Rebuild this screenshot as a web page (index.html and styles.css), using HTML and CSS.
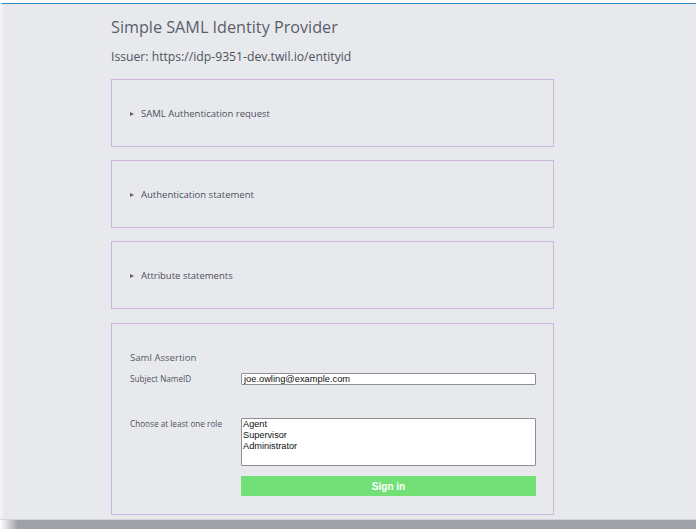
FILE: index.html
```html
<!DOCTYPE html>
<html>
<head>
<meta charset="utf-8">
<title>Simple SAML Identity Provider</title>
<link rel="stylesheet" href="styles.css">
</head>
<body>
<div class="window">
  <main class="main">
    <h1 class="title">Simple SAML Identity Provider</h1>
    <h2 class="issuer">Issuer: https://idp-9351-dev.twil.io/entityid</h2>
    <section class="box"><details><summary>SAML Authentication request</summary></details></section>
    <section class="box"><details><summary>Authentication statement</summary></details></section>
    <section class="box"><details><summary>Attribute statements</summary></details></section>
    <section class="box form-box">
      <form class="form">
        <h3 class="form-title">Saml Assertion</h3>
        <div class="row row-name">
          <label class="label" for="nameid">Subject NameID</label>
          <input class="text-input" id="nameid" type="text" value="joe.owling@example.com">
        </div>
        <div class="row row-roles">
          <label class="label" for="roles">Choose at least one role</label>
          <select class="roles" id="roles" multiple>
            <option>Agent</option>
            <option>Supervisor</option>
            <option>Administrator</option>
          </select>
        </div>
        <div class="row">
          <span></span>
          <button class="signin" type="button">Sign in</button>
        </div>
      </form>
    </section>
  </main>
</div>
<div class="shadow"></div>
</body>
</html>
```
FILE: styles.css
```css
html, body {
  margin: 0;
  padding: 0;
  background: #ffffff;
  font-family: "Open Sans", "Liberation Sans", sans-serif;
  color: #555a66;
}
.window {
  margin-top: 3px;
  border-top: 1px solid #2c88c2;
  border-left: 3px solid #f3f3f5;
  background: #e8e9ed;
  height: 516px;
  box-sizing: border-box;
  overflow: hidden;
}
.main {
  margin-left: 108px;
  width: 443px;
  display: flex;
  flex-direction: column;
}
.title {
  margin: 11px 0 0 0;
  font-size: 16.2px;
  font-weight: 400;
  line-height: 24px;
  color: #5a5e6a;
}
.issuer {
  margin: 9px 0 0 0;
  font-size: 12.2px;
  font-weight: 400;
  line-height: 18px;
  color: #4f5360;
}
.box {
  border: 1px solid #ccb5de;
  margin-top: 13px;
  height: 68px;
  box-sizing: border-box;
  display: flex;
  align-items: center;
  padding-left: 18px;
}
.box-first { margin-top: 13px; }
.box details { width: 100%; }
.box summary {
  list-style: none;
  font-size: 9.5px;
  color: #4c505c;
  cursor: pointer;
  display: flex;
  align-items: center;
}
.box summary::-webkit-details-marker { display: none; }
.box summary::before {
  content: "";
  width: 0;
  height: 0;
  border-top: 2.5px solid transparent;
  border-bottom: 2.5px solid transparent;
  border-left: 4px solid #5d606b;
  margin-right: 7px;
  margin-top: 1px;
}
.form-box {
  margin-top: 14px;
  height: 192px;
  align-items: flex-start;
  padding: 0 17px 0 18px;
}
.form { width: 100%; }
.form-title {
  margin: 25px 0 0 0;
  font-size: 9.6px;
  font-weight: 400;
  line-height: 18px;
  color: #555a66;
}
.row {
  display: grid;
  grid-template-columns: 111px 1fr;
  align-items: start;
}
.label {
  font-size: 8.2px;
  line-height: 12px;
  color: #4f5360;
}
.row-name { margin-top: 6px; }
.text-input {
  box-sizing: border-box;
  height: 12px;
  margin-top: 0;
  padding: 0 2px;
  border: 1px solid #8e8f94;
  border-radius: 1px;
  font-family: "Liberation Sans", Arial, sans-serif;
  font-size: 9.3px;
  color: #111;
  background: #fff;
}
.row-roles { margin-top: 33px; }
.roles {
  box-sizing: border-box;
  height: 48px;
  margin-top: 0;
  border: 1px solid #8e8f94;
  border-radius: 1px;
  font-family: "Liberation Sans", Arial, sans-serif;
  font-size: 9.2px;
  color: #111;
  background: #fff;
  padding: 0 1px;
  overflow: hidden;
}
.roles option { padding: 0; line-height: 11.5px; }
.signin {
  margin-top: 10px;
  height: 20px;
  border: none;
  background: #72e077;
  color: #ffffff;
  font-family: "Liberation Sans", Arial, sans-serif;
  font-weight: 700;
  font-size: 10px;
  padding: 0;
}
.shadow {
  height: 9px;
  border-top: 1px solid #d4d5da;
  background: linear-gradient(to right, #ffffff 0, #9fa1a8 18px, #9fa1a8 100%);
}
```
